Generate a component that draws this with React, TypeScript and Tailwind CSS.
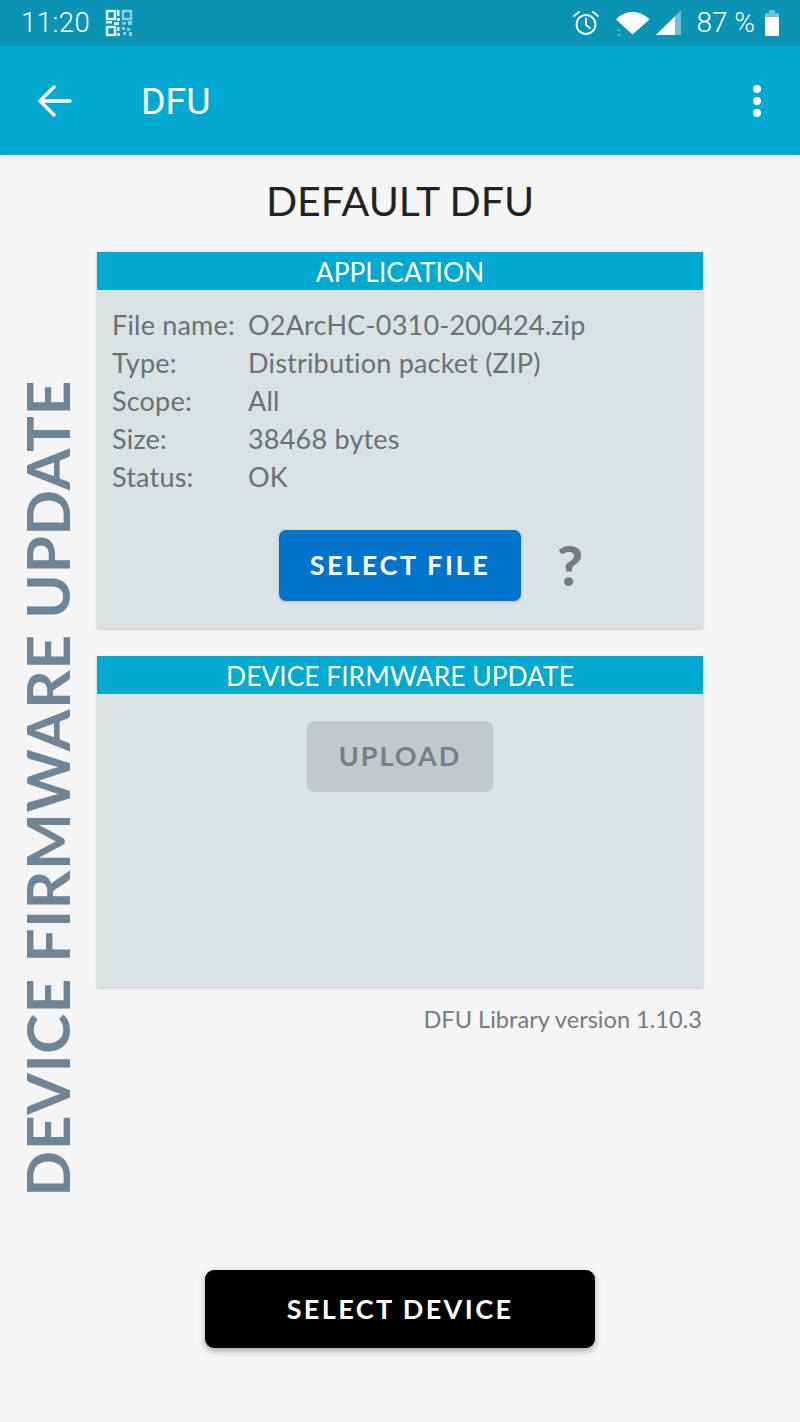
import React from 'react';

const fileInfo = [
  ['File name:', 'O2ArcHC-0310-200424.zip'],
  ['Type:', 'Distribution packet (ZIP)'],
  ['Scope:', 'All'],
  ['Size:', '38468 bytes'],
  ['Status:', 'OK'],
];

function QrIcon() {
  return (
    <svg width="28" height="28" viewBox="0 0 28 28" className="shrink-0">
      <g fill="none" stroke="#e3f4f8" strokeWidth="2.4">
        <rect x="2" y="2" width="8" height="8" />
        <rect x="2" y="18" width="8" height="8" />
      </g>
      <g fill="none" stroke="#8fd0e0" strokeWidth="2.4">
        <rect x="18" y="2" width="8" height="8" />
      </g>
      <path d="M12 1h2.500v6H12zM12 9h3v3h-3zM1 12h6v2.500H1zM9 13h5v3H9zM12 18h2.500v4H12zM12 24h3v3h-3z" fill="#e3f4f8" />
      <path d="M17 13h4v2.500h-4zM23 12h4v4h-4zM17 18h3v3h-3zM22 19h3v3h-3zM18 23h3v3h-3zM24 23h3v4h-3z" fill="#8fd0e0" />
    </svg>
  );
}

function AlarmIcon() {
  return (
    <svg width="28" height="28" viewBox="0 0 28 28" className="shrink-0">
      <g fill="none" stroke="#ffffff" strokeLinecap="round">
        <circle cx="14" cy="15.5" r="9.5" strokeWidth="2" />
        <path d="M14 9.500v6.500l4 3" strokeWidth="1.8" />
        <path d="M2 7l5-4M26 7l-5-4" strokeWidth="2" />
      </g>
    </svg>
  );
}

function WifiIcon() {
  return (
    <svg width="36" height="26" viewBox="0 0 36 26" className="shrink-0">
      <path d="M1 9.500C5.500 4.500 11.500 2 17.500 2S30 4.500 34.500 9.500L17.500 24.500z" fill="#ffffff" />
      <path d="M2 21l2-2.500 2 2.500zM2 24l2 2.500 2-2.500z" fill="#6cc0d6" />
    </svg>
  );
}

function SignalIcon() {
  return (
    <svg width="26" height="26" viewBox="0 0 26 26" className="shrink-0">
      <path d="M25 0v25H0z" fill="#6cc0d6" />
      <path d="M19 6.500V25H0z" fill="#ffffff" />
    </svg>
  );
}

function BatteryIcon() {
  return (
    <svg width="16" height="26" viewBox="0 0 16 26" className="shrink-0">
      <path d="M5 0h6v3H5z" fill="#6cc0d6" />
      <path d="M1 3h14v4H1z" fill="#6cc0d6" />
      <path d="M1 7h14v18a1 1 0 0 1-1 1H2a1 1 0 0 1-1-1z" fill="#ffffff" />
    </svg>
  );
}

export default function App() {
  return (
    <div className="w-[800px] h-[1422px] bg-[#f5f5f5] flex flex-col overflow-hidden font-['Lato',sans-serif] [font-variant-ligatures:none]">
      {/* Status bar */}
      <div className="h-[46px] shrink-0 bg-[#0a93b3] flex items-center pl-[21px] pr-[20px] text-white">
        <span className="font-['Roboto',sans-serif] text-[27.5px] leading-none font-light tracking-[0.5px]">11:20</span>
        <div className="ml-[15px]">
          <QrIcon />
        </div>
        <div className="ml-auto flex items-center">
          <AlarmIcon />
          <div className="ml-[15px]">
            <WifiIcon />
          </div>
          <div className="ml-[5px]">
            <SignalIcon />
          </div>
          <span className="ml-[14px] font-['Roboto',sans-serif] text-[28px] leading-none font-light">87 %</span>
          <div className="ml-[9px]">
            <BatteryIcon />
          </div>
        </div>
      </div>

      {/* Toolbar */}
      <div className="h-[109px] shrink-0 bg-[#00a9d0] flex items-center pl-[36px] pr-[39px] text-white shadow-[0_2px_3px_rgba(0,0,0,0.08)]">
        <svg width="38" height="34" viewBox="0 0 38 34" fill="none" stroke="#ffffff" strokeWidth="3.4" strokeLinecap="round" strokeLinejoin="round" className="shrink-0">
          <path d="M34 17H5M18 3L4 17l14 14" />
        </svg>
        <span className="ml-[67px] pt-[3px] font-['Roboto',sans-serif] text-[37.5px] leading-none">DFU</span>
        <div className="ml-auto pt-[1px] flex flex-col gap-[4px]">
          <span className="block w-[8px] h-[8px] rounded-full bg-white" />
          <span className="block w-[8px] h-[8px] rounded-full bg-white" />
          <span className="block w-[8px] h-[8px] rounded-full bg-white" />
        </div>
      </div>

      {/* Body */}
      <div className="flex-1 flex">
        <div className="w-[97px] shrink-0 flex justify-center items-start pt-[225px] pr-[4px]">
          <span className="[writing-mode:vertical-rl] rotate-180 text-[#6f8595] text-[60px] leading-none font-bold tracking-[0.8px] whitespace-nowrap">
            DEVICE FIRMWARE UPDATE
          </span>
        </div>

        <div className="w-[606px] shrink-0 flex flex-col">
          <h1 className="h-[97px] pb-[6px] flex items-center justify-center text-[#222222] text-[41px] leading-none font-normal">
            DEFAULT DFU
          </h1>

          <section className="h-[376px] bg-[#dbe2e4] shadow-[0_1px_3px_rgba(0,0,0,0.22)]">
            <div className="h-[38px] pt-[2px] bg-[#00a9d0] flex items-center justify-center text-white text-[26.4px] leading-none">
              APPLICATION
            </div>
            <div className="pt-[16px] pl-[15px] text-[#697177] text-[27px] leading-[38px] tracking-[0.2px]">
              {fileInfo.map(([label, value]) => (
                <div key={label} className="flex">
                  <span className="w-[136px] shrink-0">{label}</span>
                  <span>{value}</span>
                </div>
              ))}
            </div>
            <div className="relative mt-[34px] flex justify-center">
              <button className="w-[242px] h-[71px] rounded-[7px] bg-[#0074cc] text-white text-[27px] font-bold tracking-[2.600px] shadow-[0_1px_3px_rgba(0,0,0,0.2)]">
                SELECT FILE
              </button>
              <span className="absolute left-[460px] top-[2px] text-[#777b7e] text-[56px] leading-[66px] font-black">?</span>
            </div>
          </section>

          <section className="mt-[28px] h-[331px] bg-[#dbe2e4] shadow-[0_1px_3px_rgba(0,0,0,0.22)]">
            <div className="h-[38px] pt-[2px] bg-[#00a9d0] flex items-center justify-center text-white text-[26.4px] leading-none">
              DEVICE FIRMWARE UPDATE
            </div>
            <div className="pt-[27px] flex justify-center">
              <button className="w-[186px] h-[71px] rounded-[7px] bg-[#c2c8cb] text-[#787f84] text-[27px] font-bold tracking-[2px]">
                UPLOAD
              </button>
            </div>
          </section>

          <p className="mt-[17px] text-right pr-[1px] text-[#757b80] text-[23.6px] leading-[30px]">
            DFU Library version 1.10.3
          </p>

          <div className="mt-[236px] flex justify-center">
            <button className="w-[390px] h-[78px] rounded-[9px] bg-black text-white text-[27px] font-bold tracking-[2.400px] shadow-[0_3px_6px_rgba(0,0,0,0.3)]">
              SELECT DEVICE
            </button>
          </div>
        </div>
      </div>
    </div>
  );
}
